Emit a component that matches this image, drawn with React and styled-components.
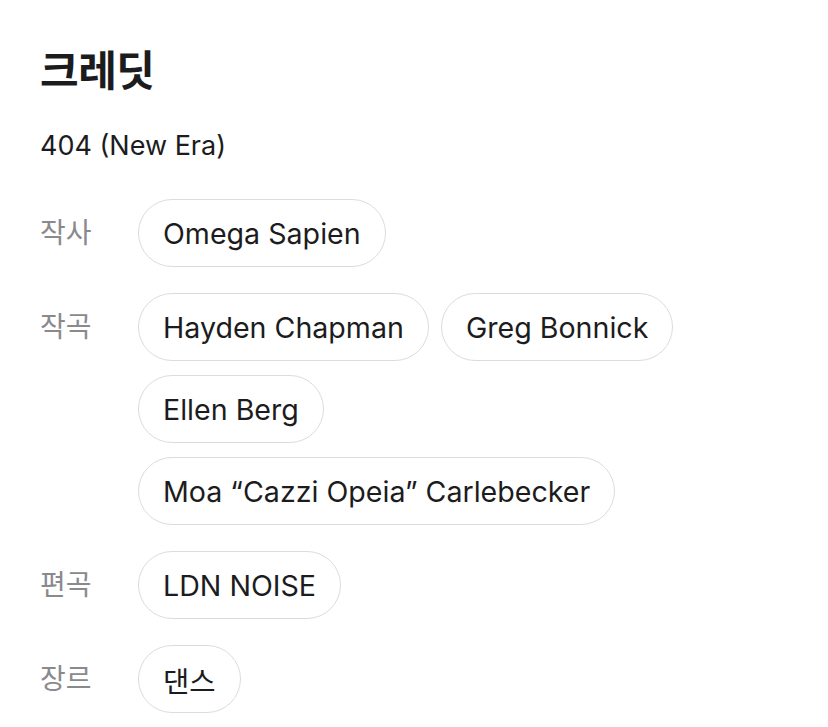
import styled, { createGlobalStyle } from 'styled-components';

const GlobalStyle = createGlobalStyle`
   body {
      margin: 0;
      background: #ffffff;
      font-family: Inter, "Noto Sans CJK KR", sans-serif;
      color: #1c1c1e;
   }
`;

const Page = styled.div`
   padding: 44px 40px 0 40px;
`;

const Title = styled.h2`
   margin: 0;
   font-size: 42px;
   font-weight: 700;
   line-height: 54px;
   letter-spacing: -0.5px;
`;

const Subtitle = styled.p`
   margin: 31px 0 0 0;
   font-size: 27px;
   line-height: 34px;
`;

const Rows = styled.div`
   display: flex;
   flex-direction: column;
   gap: 26px;
   margin-top: 36px;
`;

const Row = styled.div`
   display: flex;
   align-items: flex-start;
`;

const Label = styled.span`
   width: 98px;
   flex-shrink: 0;
   font-size: 28px;
   line-height: 68px;
   color: #8a8a8e;
`;

const Chips = styled.div`
   display: flex;
   flex-wrap: wrap;
   gap: 14px 12px;
   max-width: 560px;
`;

const Chip = styled.span`
   display: inline-flex;
   align-items: center;
   height: 68px;
   box-sizing: border-box;
   padding: 0 24px;
   border: 1px solid #dcdcdc;
   border-radius: 34px;
   font-size: 28.6px;
   color: #1c1c1e;
   white-space: nowrap;
`;

const credits = [
   { role: '작사', names: ['Omega Sapien'] },
   {
      role: '작곡',
      names: [
         'Hayden Chapman',
         'Greg Bonnick',
         'Ellen Berg',
         'Moa “Cazzi Opeia” Carlebecker',
      ],
   },
   { role: '편곡', names: ['LDN NOISE'] },
   { role: '장르', names: ['댄스'] },
];

function App() {
   return (
      <>
         <GlobalStyle />
         <Page>
            <Title>크레딧</Title>
            <Subtitle>404 (New Era)</Subtitle>
            <Rows>
               {credits.map((c) => (
                  <Row key={c.role}>
                     <Label>{c.role}</Label>
                     <Chips>
                        {c.names.map((n) => (
                           <Chip key={n}>{n}</Chip>
                        ))}
                     </Chips>
                  </Row>
               ))}
            </Rows>
         </Page>
      </>
   );
}

export default App;
